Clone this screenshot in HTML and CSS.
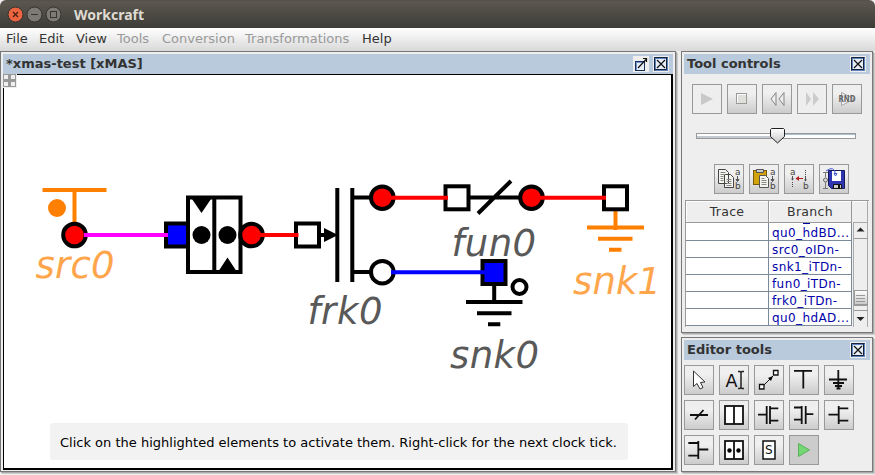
FILE: index.html
```html
<!DOCTYPE html>
<html lang="en">
<head>
<meta charset="utf-8">
<title>Workcraft</title>
<link rel="stylesheet" href="styles.css">
</head>
<body>
<svg width="0" height="0" class="defs">
  <defs>
    <linearGradient id="face" x1="0" y1="0" x2="0" y2="1"><stop offset="0" stop-color="#fff"/><stop offset="1" stop-color="#c8c8c8"/></linearGradient>
    <g id="close"><path d="M0 0h16v16H0z" fill="#eee"/><rect x="2" y="2" width="12" height="12" fill="#e8eef5" stroke="#5f83bd" stroke-width="2"/><path d="M1.500 14.500v-13h13M13.500 2v11.500h-12" fill="none" stroke="#15233c"/><path d="M4 4l8 8M12 4l-8 8" stroke="#111" stroke-width="1.200"/></g>
    <g id="ab" class="ab"><text x="21" y="10.500">a</text><text x="21" y="25">b</text><path d="M23.500 12v5M22 15.500h3l-1.500 2z" stroke="#555"/></g>
  </defs>
</svg>
<header class="titlebar">
  <svg class="winbtns" width="64" height="28">
    <circle cx="15.500" cy="14.500" r="7.500" fill="#ed6440" stroke="#33322d"/><path d="M13 12l5 5M18 12l-5 5" stroke="#4a2012" stroke-width="1.300"/>
    <circle cx="34.500" cy="14.500" r="7.500" fill="#7c7a73" stroke="#33322d"/><path d="M31 14.500h7" stroke="#35342f"/>
    <circle cx="53.500" cy="14.500" r="7.500" fill="#7c7a73" stroke="#33322d"/><rect x="50.500" y="11.500" width="6" height="6" fill="none" stroke="#35342f"/>
  </svg>
  <span class="apptitle">Workcraft</span>
</header>
<nav class="menu"><span class="m1">File</span><span class="m2">Edit</span><span class="m3">View</span><span class="m4 off">Tools</span><span class="m5 off">Conversion</span><span class="m6 off">Transformations</span><span class="m7">Help</span></nav>
<main class="desk">
  <section class="frame editor">
    <div class="head"><span class="t1">*xmas-test [xMAS]</span>
      <svg width="16" height="16"><rect width="16" height="16" fill="#eee"/><rect x="2.500" y="5.500" width="9" height="9" fill="#e8eef5" stroke="#17305c"/><path d="M3.500 14V6.500H11" fill="none" stroke="#6f91c6"/><path d="M5 12l8.500-9M10 2.500h4M13.500 2v4" fill="none" stroke="#111" stroke-width="1.200"/></svg>
      <svg class="x2" width="16" height="16"><use href="#close"/></svg></div>
    <div class="canvas">
      <svg class="diagram" width="670" height="396" viewBox="3 74 670 396">
        <g stroke="#ff8000" stroke-width="4" fill="none"><path d="M42.500 190h64M74.500 190v35M615.500 211v19M587 227.500h57M598 238.700h34.500M609 249.700h12.500"/></g>
        <circle cx="57" cy="208" r="9" fill="#ff8000"/>
        <g fill="#fff" stroke="#000" stroke-width="4">
          <circle cx="74.500" cy="235" r="11.300" fill="red"/>
          <rect x="166" y="223.500" width="23" height="23" fill="blue"/>
          <rect x="188" y="197.500" width="52.500" height="74.500"/><path d="M214.300 197v76"/>
          <circle cx="251.500" cy="235" r="11.300" fill="red"/>
          <rect x="296" y="223.500" width="23" height="23"/>
          <path d="M321 235h8M337.300 188v94M352.300 188v94M352 197.500h20M352 272h20"/>
          <circle cx="382.300" cy="197.700" r="11.300" fill="red"/><circle cx="382.300" cy="272.200" r="11.300"/>
          <rect x="445.500" y="186.300" width="23" height="23"/><path d="M470 197.500h50M478 213.500l33-32.500"/>
          <circle cx="531.500" cy="197.700" r="11.300" fill="red"/><rect x="604" y="186.300" width="23" height="23"/>
          <path d="M494.200 284v20M466 302h56.500M477 313.200h34.500M488 324.300h12.300"/>
          <rect x="482.500" y="261" width="23" height="23" fill="blue"/><circle cx="519.500" cy="287" r="7"/>
        </g>
        <path d="M192 199h19l-9.500 14zM218 272l9.500-14.500L237 272zM324 228l14 7-14 7z"/><circle cx="201.500" cy="235" r="9"/><circle cx="227.500" cy="235" r="9"/>
        <g fill="none" stroke-width="4"><path stroke="#f0f" d="M84 235h84"/><path stroke="red" d="M260 235h38.500M391 197.700h57M540 197.700h66"/><path stroke="#00f" d="M391 272.200h94"/></g>
        <g class="labels"><text class="hot" x="35.500" y="278" textLength="79">src0</text><text x="307.500" y="324" textLength="75">frk0</text><text x="451.500" y="256" textLength="84.500">fun0</text><text class="hot" x="573" y="294" textLength="88">snk1</text><text x="450" y="368" textLength="89">snk0</text></g>
      </svg>
      <svg class="corner" width="14" height="14"><rect width="14" height="14" fill="#999"/><path d="M1 1h4v4H1zM8 1h4v4H8zM1 8h4v4H1zM8 8h4v4H8zM13 0h1v14H0v-1h13z" fill="#eee"/></svg>
      <div class="hint"><svg width="578" height="37"><text x="10" y="24" textLength="557">Click on the highlighted elements to activate them. Right-click for the next clock tick.</text></svg></div>
    </div>
  </section>
  <aside class="side">
    <section class="frame controls">
      <div class="head"><span class="t2">Tool controls</span><svg width="16" height="16"><use href="#close"/></svg></div>
      <div class="row play">
        <svg class="btn flat"><path d="M9 9l12 6-12 6z" fill="#c8c8c8"/></svg>
        <svg class="btn"><rect x="9.500" y="9.500" width="10" height="10" fill="#dfe0dc" stroke="#999"/><path d="M10.500 19v-8.500H19" stroke="#fff" fill="none"/></svg>
        <svg class="btn"><path d="M14 8.500v13l-5-6.500zM22 8.500v13l-5-6.500z" fill="#eee" stroke="#858585"/></svg>
        <svg class="btn flat"><path d="M9 8v14l5-7zM16 8v14l6-7z" fill="#ccc"/></svg>
        <svg class="btn"><path d="M9.500 8.500v13l13-6.500z" fill="#eee" stroke="#aaa"/><text x="6.500" y="18" textLength="17" lengthAdjust="spacingAndGlyphs" class="rnd">RND</text></svg>
      </div>
      <svg class="slider" width="162" height="18"><rect x="1.500" y="6.500" width="159" height="5" fill="#fff" stroke="#999"/><path d="M2 10h78" stroke="#c4cad2" stroke-width="2"/><path d="M83 7.500h77" stroke="#a9bed2"/><path d="M76.500 1.500h12l1 1v7l-7 6.500-7-6.500v-7z" fill="url(#face)" stroke="#222"/></svg>
      <div class="row copy">
        <svg class="btn"><path d="M4.500 5.500h7l3 3v11h-10zM10.500 10.500h6l3 3v10h-9z" fill="#f5f5f0" stroke="#444"/><path d="M6.500 8.500h5M6.500 10.500h5M6.500 12.500h3M6.500 14.500h3M6.500 16.500h3M12.500 15.500h5M12.500 17.500h5M12.500 19.500h5M12.500 21.500h5" stroke="#888"/><use href="#ab"/></svg>
        <svg class="btn"><rect x="4.500" y="6.500" width="13" height="14" fill="#d3a30a" stroke="#785b08"/><path d="M7.500 5.500h7v3h-7z" fill="#ccc" stroke="#555"/><path d="M10.500 11.500h6l3 3v9h-9z" fill="#f5f5f0" stroke="#555"/><path d="M12.500 14.500h3M12.500 16.500h5M12.500 18.500h5M12.500 20.500h5" stroke="#888"/><use href="#ab"/></svg>
        <svg class="btn"><g class="ab"><text x="6" y="10.500">a</text><text x="19" y="25">b</text></g><path d="M8.500 12v4M21.500 13v4" stroke="#555"/><path d="M7 14.500h3l-1.500 2zM20 15.500h3l-1.500 2z" fill="#444"/><path d="M8.500 18v6M21.500 6v7" stroke="#444" stroke-dasharray="1 1"/><path d="M12 14.500h7" stroke="#b32020"/><path d="M11.500 14.500l3.500-2.500v5z" fill="#b32020"/></svg>
        <svg class="btn"><path d="M9.500 6.500h16v18h-13l-3-3z" fill="#2f35b0" stroke="#16195a"/><path d="M13 7h9v10h-9z" fill="#fff"/><path d="M14.500 20.500h8v4h-8z" fill="#ccc" stroke="#111"/><path d="M20 21v3" stroke="#111" stroke-width="2"/><path d="M7 7q8-6 9.500 3M15 9.500h3L16.500 12z" fill="none" stroke="#4058d0"/><path d="M6.500 8v5M6.500 18v6M4 24.500h5M4 8.500h5" stroke="#777"/><circle cx="6.500" cy="16" r="2" fill="#ddd" stroke="#666"/></svg>
      </div>
      <div class="table">
        <div class="cols">
          <div class="th">Trace</div><div class="th">Branch</div>
          <div class="td tiny"></div><div class="td tiny"><i></i></div>
          <div class="td"></div><div class="td"><span class="l1">qu0_hdBD...</span></div>
          <div class="td"></div><div class="td"><span class="l2">src0_oIDn-</span></div>
          <div class="td"></div><div class="td"><span class="l2">snk1_iTDn-</span></div>
          <div class="td"></div><div class="td"><span class="l2">fun0_iTDn-</span></div>
          <div class="td"></div><div class="td"><span class="l2">frk0_iTDn-</span></div>
          <div class="td"></div><div class="td"><span class="l1">qu0_hdAD...</span></div>
        </div>
        <svg class="scroll" width="16" height="126"><path d="M.5 22V126M0 21.500h15M14.500 0v126" stroke="#aaa" fill="none"/><path d="M3.500 30.500h8l-4-4zM3.500 116h8l-4 4z" fill="#222"/><path d="M1 37.500h14M1 109.500h14M1 104.500h14" stroke="#999"/><rect x="1.500" y="89.500" width="13" height="14" fill="url(#face)" stroke="#999"/><path d="M3 94.500h9M3 97.500h9M3 100.500h9" stroke="#999"/></svg>
      </div>
    </section>
    <section class="frame tools">
      <div class="head"><span class="t3">Editor tools</span><svg width="16" height="16"><use href="#close"/></svg></div>
      <div class="grid">
        <svg class="btn"><path d="M9.500 6v15.500l3.500-3 3 5.500 3-1.500-2.500-5 4.500-.5z" fill="#fff" stroke="#333"/></svg>
        <svg class="btn"><text x="6.500" y="22" class="aic" textLength="12" lengthAdjust="spacingAndGlyphs">A</text><path d="M19 6.500h2l1 1 1-1h2M22 7v16M19 23.500h2l1-1 1 1h2" fill="none" stroke="#222" stroke-width="1.500"/></svg>
        <svg class="btn"><path d="M10 20l9-9" stroke="#111"/><path d="M19 11l-5 2 3 3z"/><path d="M5.500 19.500h4.500v4.500h-4.500zM19.500 5.500h4.500v4.500h-4.500z" fill="#fff" stroke="#111" stroke-width="1.300"/></svg>
        <svg class="btn g"><path d="M5 5.800h18M14.300 6v17.500"/></svg>
        <svg class="btn g"><path d="M14.300 5v18.500M5 14.500h18M9 18h11M11 21h7M12.500 23.500h4"/></svg>
        <svg class="btn g"><path d="M6 15h18M11 19.500l8.500-9.500"/></svg>
        <svg class="btn g"><rect x="6" y="6" width="18" height="18" fill="#fff"/><path d="M15 6v18"/></svg>
        <svg class="btn g"><path d="M4 14.700h9M12.700 6v18M16 6v18M16 8.300h8.300M16 20.700h8.300"/></svg>
        <svg class="btn g"><path d="M5 7.500h8M5 19.700h8M12.700 6v18M16.700 6v18M17 14.200h7.300"/></svg>
        <svg class="btn g"><path d="M4.500 14.700H14M14.700 6v18M15 8.300h9.300M15 20.700h9.300"/></svg>
        <svg class="btn g"><path d="M4.300 8h9.500M4.300 20.700h9.500M14.300 6v18M14.300 14.500h10"/></svg>
        <svg class="btn g"><rect x="6" y="6" width="18" height="18" fill="#fff"/><path d="M15 6v18"/><g class="dots"><circle cx="10.500" cy="15.500" r="2.200"/><circle cx="19.500" cy="15.500" r="2.200"/></g></svg>
        <svg class="btn"><rect x="9" y="6" width="12" height="18" fill="#fff" stroke="#111" stroke-width="1.500"/><text x="11" y="19" class="s">S</text></svg>
        <svg class="btn on"><path d="M9.500 8.500v13l11-6.500z" fill="#73d873" stroke="#59b259"/></svg>
      </div>
    </section>
  </aside>
</main>
</body>
</html>
```
FILE: styles.css
```css
* { box-sizing: border-box; }
body { margin: 0; width: 875px; height: 475px; overflow: hidden; background: #eee; font-family: "DejaVu Sans", sans-serif; font-size: 13px; color: #333; }
svg { display: block; flex: none; }
.defs { position: absolute; }
.titlebar { height: 28px; display: flex; align-items: center; background: linear-gradient(#54514a, #5b574f 2px, #3d3c37); border-radius: 6px 6px 0 0; }
.winbtns { margin-right: 10px; }
.apptitle { font: bold 14px/28px "Noto Sans", sans-serif; color: #dfdbd2; padding-top: 1px; }
.menu { height: 23px; padding-left: 6px; display: flex; line-height: 22px; background: linear-gradient(#fff, #dadada 22px); white-space: nowrap; }
.menu span { flex: none; font-size: 13px; }
.m1 { width: 33px; } .m2 { width: 37px; } .m3 { width: 41px; } .m4 { width: 45px; } .m5 { width: 83px; } .m6 { width: 117px; }
.off { color: #999; }
.desk { display: flex; gap: 4px; height: 424px; }
.frame { border: 1px solid #777; padding: 2px; background: #eee; box-shadow: 1px 1px 0 #aaa, 2px 2px 0 #ccc; }
.editor { width: 676px; height: 421px; }
.head { height: 20px; display: flex; align-items: center; background: #b8cadb; padding: 0 1px 0 3px; font-weight: bold; line-height: 20px; white-space: nowrap; }
.head span { margin-right: auto; }
.x2 { margin-left: 4px; margin-right: 3px; }
.canvas { position: relative; height: 396px; width: 670px; background: #fff; border: solid #000; border-width: 1px 2px 2px 1px; }
.diagram { margin: -1px 0 0 -1px; }
.corner { position: absolute; left: -1px; top: -1px; }
.hint { position: absolute; left: 46px; top: 348px; width: 578px; height: 37px; background: #f2f2f2; border-radius: 3px; font-size: 13px; }
.hint text { fill: #000; }
.labels { font-size: 37px; font-style: italic; fill: #595959; }
.labels .hot { fill: #ffa64d; }
.side { width: 193px; display: flex; flex-direction: column; gap: 4px; margin-left: 1px; }
.side .frame { width: 192px; }
.side .head { padding-right: 4px; }
.controls { height: 282px; }
.tools { height: 135px; }
.row { display: flex; gap: 5px; }
.play { padding: 10px 0 0 8px; }
.slider { margin: 13px 0 0 11px; }
.copy { padding: 19px 0 0 30px; }
.btn { width: 30px; height: 30px; border: 1px solid #999; background: linear-gradient(#eee, #f0f0f0 30%, #ccc); overflow: hidden; padding: 0; }
.btn > * { transform: translate(-1px, -1px); }
.flat { background: #eee; }
.on { background: #ccc; }
.g { fill: none; stroke: #111; stroke-width: 1.8px; }
.dots { stroke: none; fill: #000; }
.ab { font-size: 9px; fill: #444; }
.rnd { font-size: 8px; font-weight: bold; fill: #666; }
.aic { font-size: 18px; fill: #111; }
.s { font-size: 12px; fill: #111; }
.table { display: flex; width: 184px; height: 127px; margin: 6px 0 0 1px; border: solid #999; border-width: 1px 0 0 1px; box-shadow: inset 1px 1px 0 #fff; }
.cols { display: grid; grid-template-columns: 83px 83px; grid-template-rows: 22px 1px repeat(6, 17px); height: 126px; font-size: 12px; }
.th { text-align: center; line-height: 22px; font-size: 12.5px; letter-spacing: .3px; border: solid #999; border-width: 0 1px 1px 0; box-shadow: inset 1px 1px 0 #fff; }
.td { background: #fff; border: solid #7a8a99; border-width: 0 1px 1px 0; line-height: 18px; padding-left: 3px; color: #00a; white-space: nowrap; overflow: hidden; letter-spacing: .4px; }
.tiny { border-bottom-width: 0; }
.tiny i { display: block; width: 7px; height: 1px; margin-left: 31px; background: #00a; }
.scroll { margin-left: 1px; }
.grid { display: grid; grid-template-columns: repeat(5, 30px); gap: 5px; padding-top: 5px; }
```
